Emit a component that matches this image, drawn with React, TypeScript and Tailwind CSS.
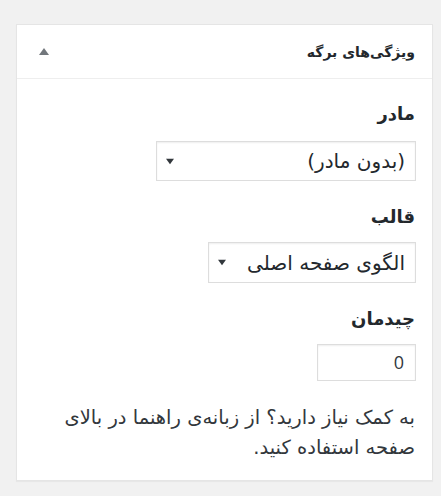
import React from 'react';

const fa = "font-['DejaVu_Sans',sans-serif]";

function Caret({ up = false, className = '' }: { up?: boolean; className?: string }) {
  return (
    <svg width="10" height="7" viewBox="0 0 10 7" className={className}>
      {up ? <polygon points="5,0 10,7 0,7" fill="currentColor" /> : <polygon points="0,0 10,0 5,7" fill="currentColor" />}
    </svg>
  );
}

export default function App() {
  return (
    <div className="w-[441px] h-[496px] bg-[#f1f1f1] pt-[24px] pl-[16px] overflow-hidden">
      <div
        dir="rtl"
        className={`w-[417px] h-[457px] bg-white border border-[#e5e5e5] shadow-[0_1px_1px_rgba(0,0,0,0.04)] text-[#23282d] ${fa}`}
      >
        {/* سربرگ */}
        <div className="h-[54px] flex items-center justify-between pr-[17px] pl-[22px] border-b border-[#eeeeee]">
          <h2 className="text-[14px] font-bold leading-none">ویژگی‌های برگه</h2>
          <Caret up className="text-[#72777c]" />
        </div>

        {/* بدنه */}
        <div className="pr-[17px] pt-[21px] flex flex-col items-start">
          <p className="text-[18px] font-bold leading-[28px]">مادر</p>
          <div className="mt-[13px] w-[260px] h-[40px] border border-[#dddddd] shadow-[inset_0_1px_2px_rgba(0,0,0,0.07)] flex items-center justify-between pr-[10px] pl-[9px] -mr-[1px]">
            <span className="text-[20px] leading-none">(بدون مادر)</span>
            <Caret className="text-[#32373c] w-[8px] h-[7px]" />
          </div>

          <p className="mt-[22px] text-[18px] font-bold leading-[28px]">قالب</p>
          <div className="mt-[11px] w-[208px] h-[41px] border border-[#dddddd] shadow-[inset_0_1px_2px_rgba(0,0,0,0.07)] flex items-center justify-between pr-[10px] pl-[9px] -mr-[1px]">
            <span className="text-[20px] leading-none">الگوی صفحه اصلی</span>
            <Caret className="text-[#32373c] w-[8px] h-[7px]" />
          </div>

          <p className="mt-[22px] text-[18px] font-bold leading-[28px]">چیدمان</p>
          <div className="mt-[11px] w-[99px] h-[37px] border border-[#dddddd] shadow-[inset_0_1px_2px_rgba(0,0,0,0.07)] flex items-center pr-[11px] -mr-[1px]">
            <span className="text-[18px] font-['Open_Sans',sans-serif] text-[#32373c]">0</span>
          </div>

          <p className="mt-[22px] text-[19.5px] leading-[30px] text-[#32373c] w-[360px]">
            به کمک نیاز دارید؟ از زبانه‌ی راهنما در بالای صفحه استفاده کنید.
          </p>
        </div>
      </div>
    </div>
  );
}
